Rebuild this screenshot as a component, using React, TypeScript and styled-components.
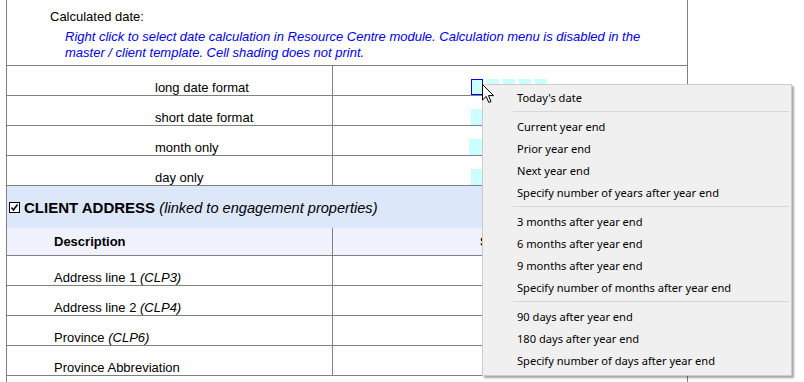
import styled, { createGlobalStyle } from 'styled-components'

const Global = createGlobalStyle`
  html, body {
    margin: 0;
    padding: 0;
    background: #fff;
  }
  body {
    font-family: 'Liberation Sans', Arial, sans-serif;
    color: #000;
  }
`

const Page = styled.div`
  position: relative;
  width: 804px;
  height: 382px;
  overflow: hidden;
  padding-left: 6px;
  box-sizing: border-box;
`

const Sheet = styled.div`
  width: 682px;
  border-left: 1px solid #808080;
  border-right: 1px solid #808080;
  box-sizing: border-box;
`

const Note = styled.div`
  height: 66px;
  box-sizing: border-box;
  border-bottom: 1px solid #808080;
  padding: 9px 0 0 43px;
  font-size: 13px;
  line-height: 16px;
`

const Hint = styled.div`
  margin: 4px 0 0 15px;
  font-style: italic;
  color: #0000f0;
`

const Row = styled.div<{ $h?: number; $bg?: string }>`
  display: grid;
  grid-template-columns: 325px 1fr;
  height: ${p => p.$h ?? 30}px;
  box-sizing: border-box;
  border-bottom: 1px solid #808080;
  background: ${p => p.$bg ?? 'transparent'};
  font-size: 13px;
`

const Cell = styled.div<{ $indent?: number; $bold?: boolean }>`
  display: flex;
  align-items: flex-end;
  padding: 0 0 0 ${p => p.$indent ?? 0}px;
  font-weight: ${p => (p.$bold ? 'bold' : 'normal')};
  line-height: 14px;
  & + & {
    border-left: 1px solid #808080;
  }
`

const MiddleCell = styled(Cell)`
  align-items: center;
  padding-top: 1px;
`

const Shades = styled.div<{ $at?: number }>`
  display: flex;
  gap: 4px;
  margin-left: ${p => p.$at ?? 138}px;
`

const Shade = styled.span<{ $w?: number; $sel?: boolean }>`
  display: block;
  width: ${p => p.$w ?? 12}px;
  height: 16px;
  background: #ccffff;
  box-sizing: border-box;
  border: ${p => (p.$sel ? '1px solid #0000ff' : 'none')};
`

const Band = styled.div`
  height: 42px;
  background: #dde7fa;
  display: flex;
  align-items: center;
  gap: 4px;
  padding: 1px 0 0 2px;
  box-sizing: border-box;
  font-size: 15px;
`

const Box = styled.span`
  display: inline-flex;
  width: 11px;
  height: 11px;
  box-sizing: border-box;
  border: 1px solid #000;
  background: #fff;
  align-items: center;
  justify-content: center;
`

const Title = styled.b`
  font-weight: bold;
`

const Aside = styled.i<{ $size?: number }>`
  font-style: italic;
  font-size: ${p => (p.$size ? `${p.$size}px` : 'inherit')};
`

const Menu = styled.div`
  position: absolute;
  left: 482px;
  top: 84px;
  width: 310px;
  box-sizing: border-box;
  padding: 1px 2px 4px 2px;
  background: #f0f0f0;
  border: 1px solid #cccccc;
  box-shadow: 2px 2px 2px rgba(0, 0, 0, 0.35);
  font-family: 'Noto Sans', 'Open Sans', sans-serif;
  font-size: 11.1px;
`

const Item = styled.div`
  height: 22px;
  display: flex;
  align-items: center;
  padding-left: 32px;
  white-space: nowrap;
`

const Sep = styled.div`
  height: 1px;
  margin: 3px 0 3px 28px;
  background: #d7d7d7;
`

const Cursor = styled.svg`
  position: absolute;
  left: 482px;
  top: 84px;
`

const menu = [
  ["Today's date"],
  ['Current year end', 'Prior year end', 'Next year end', 'Specify number of years after year end'],
  ['3 months after year end', '6 months after year end', '9 months after year end', 'Specify number of months after year end'],
  ['90 days after year end', '180 days after year end', 'Specify number of days after year end'],
]

const dateRows = ['long date format', 'short date format', 'month only', 'day only']

const addressRows: [string, string?][] = [
  ['Address line 1', '(CLP3)'],
  ['Address line 2', '(CLP4)'],
  ['Province', '(CLP6)'],
  ['Province Abbreviation'],
]

export default function App() {
  return (
    <Page>
      <Global />
      <Sheet>
        <Note>
          Calculated date:
          <Hint>
            Right click to select date calculation in Resource Centre module. Calculation menu is disabled in the
            <br />
            master / client template. Cell shading does not print.
          </Hint>
        </Note>
        {dateRows.map((label, i) => (
          <Row key={label}>
            <Cell $indent={148}>{label}</Cell>
            <Cell>
              {i === 0 ? (
                <Shades>
                  <Shade $sel />
                  <Shade />
                  <Shade />
                  <Shade />
                  <Shade />
                </Shades>
              ) : (
                <Shades $at={i === 2 ? 136 : 138}>
                  <Shade $w={60} />
                </Shades>
              )}
            </Cell>
          </Row>
        ))}
        <Band>
          <Box>
            <svg width="9" height="9" viewBox="0 0 9 9">
              <path d="M1.5 4.5 L3.5 7 L7.5 1.5" fill="none" stroke="#000" strokeWidth="1.6" />
            </svg>
          </Box>
          <span>
            <Title>CLIENT ADDRESS</Title> <Aside $size={14.6}>(linked to engagement properties)</Aside>
          </span>
        </Band>
        <Row $h={28} $bg="#eff1fc">
          <MiddleCell $indent={47} $bold>
            Description
          </MiddleCell>
          <MiddleCell $indent={147} $bold>
            Selection
          </MiddleCell>
        </Row>
        {addressRows.map(([label, code]) => (
          <Row key={label}>
            <Cell $indent={47}>
              {label}
              {code && <>&nbsp;<Aside>{code}</Aside></>}
            </Cell>
            <Cell />
          </Row>
        ))}
        <Row />
      </Sheet>
      <Menu>
        {menu.map((group, g) => (
          <div key={g}>
            {g > 0 && <Sep />}
            {group.map(label => (
              <Item key={label}>{label}</Item>
            ))}
          </div>
        ))}
      </Menu>
      <Cursor width="13" height="20" viewBox="0 0 13 20">
        <path d="M0.5 0.5 L0.5 16 L4.2 12.4 L6.8 18.5 L9 17.6 L6.5 11.6 L11.5 11.6 Z" fill="#fff" stroke="#000" strokeWidth="1" />
      </Cursor>
    </Page>
  )
}
